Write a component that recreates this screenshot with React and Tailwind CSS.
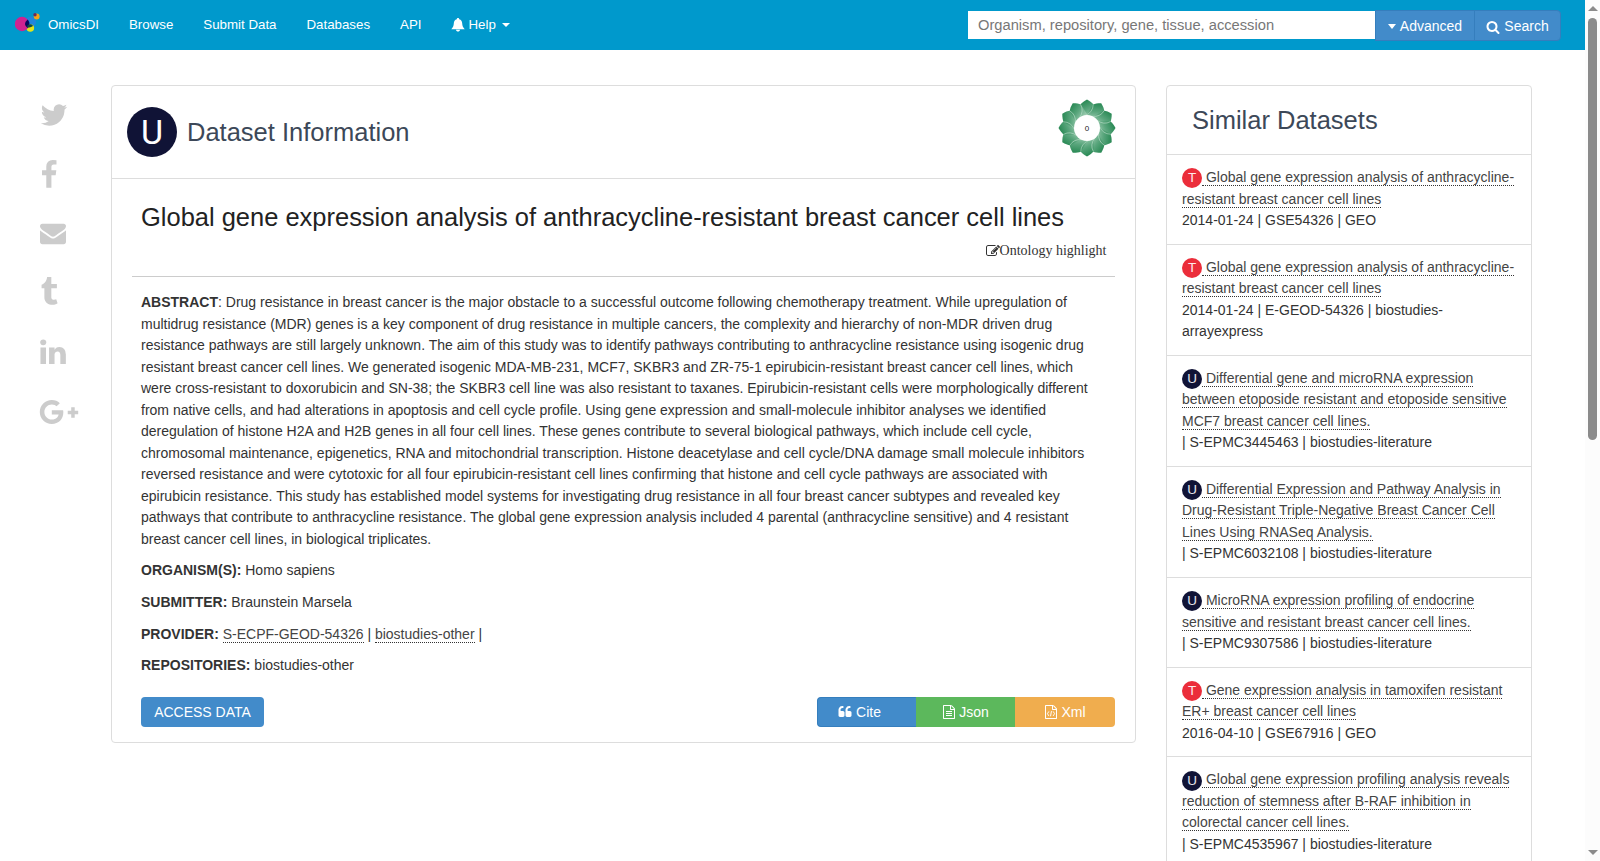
import React from 'react';
import { FaGooglePlusG } from 'react-icons/fa';

const ICONS = {
    twitter: 'M1684 408q-67 98-162 167 1 14 1 42 0 130-38 259.5t-115.5 248.5-184.5 210.5-258 146-323 54.5q-271 0-496-145 35 4 78 4 225 0 401-138-105-2-188-64.5t-114-159.5q33 5 61 5 43 0 85-11-112-23-185.5-111.5t-73.5-205.5v-4q68 38 146 41-66-44-105-115t-39-154q0-88 44-163 121 149 294.5 238.5t371.5 99.5q-8-38-8-74 0-134 94.5-228.5t228.5-94.5q140 0 236 102 109-21 205-78-37 115-142 178 93-10 186-50z',
    facebook: 'M1343 12v264h-157q-86 0-116 36t-30 108v189h293l-39 296h-254v759h-306v-759h-255v-296h255v-218q0-186 104-288.5t277-102.5q147 0 228 12z',
    envelope: 'M1792 710v794q0 66-47 113t-113 47h-1472q-66 0-113-47t-47-113v-794q44 49 101 87 362 246 497 345 57 42 92.5 65.5t94.5 48 110 24.5h2q51 0 110-24.5t94.5-48 92.5-65.5q170-123 498-345 57-39 100-87zm0-294q0 79-49 151t-122 123q-376 261-468 325-10 7-42.5 31t-54 38.5-52 32.5-57.5 27-50 9h-2q-23 0-50-9t-57.5-27-52-32.5-54-38.5-42.5-31q-91-64-262-182.5t-205-142.5q-62-42-117-115.5t-55-136.5q0-78 41.5-130t118.5-52h1472q65 0 112.5 47t47.5 113z',
    tumblr: 'M1328 1329l80 237q-23 35-111 66t-177 32q-104 2-190.5-26t-142.5-74-95-106-55.5-120-16.5-118v-544h-168v-215q72-26 129-69.5t91-90 58-102 34-99 15-88.5q1-5 4.5-8.5t7.5-3.5h244v424h333v252h-334v518q0 30 6.5 56t22.5 52.5 49.5 41.5 81.5 14q78-2 134-29z',
    linkedin: 'M477 625v991h-330v-991h330zm21-306q1 73-50.5 122t-135.5 49h-2q-82 0-132-49t-50-122q0-74 51.5-122.5t134.5-48.5 133 48.5 51 122.5zm1166 729v568h-329v-530q0-105-40.5-164.5t-126.5-59.5q-63 0-105.5 34.5t-63.5 85.5q-11 30-11 81v553h-329q2-399 2-647t-1-296l-1-48h329v144h-2q20-32 41-56t56.5-52 87-43.5 114.5-15.5q171 0 275 113.5t104 332.5z',
    search: 'M1216 832q0-185-131.5-316.5t-316.5-131.5-316.5 131.5-131.5 316.5 131.5 316.5 316.5 131.5 316.5-131.5 131.5-316.5zm512 832q0 52-38 90t-90 38q-54 0-90-38l-343-342q-179 124-399 124-143 0-273.5-55.5t-225-150-150-225-55.5-273.5 55.5-273.5 150-225 225-150 273.5-55.5 273.5 55.5 225 150 150 225 55.5 273.5q0 220-124 399l343 343q37 37 37 90z',
    edit: 'M888 1184l116-116-152-152-116 116v56h96v96h56zm440-720q-16-16-33 1l-350 350q-17 17-1 33t33-1l350-350q17-17 1-33zm80 594v190q0 119-84.5 203.5t-203.5 84.5h-832q-119 0-203.5-84.5t-84.5-203.5v-832q0-119 84.5-203.5t203.5-84.5h832q63 0 117 25 15 7 18 23 3 17-9 29l-49 49q-14 14-32 8-23-6-45-6h-832q-66 0-113 47t-47 113v832q0 66 47 113t113 47h832q66 0 113-47t47-113v-126q0-13 9-22l64-64q15-15 35-7t20 29zm-96-738l288 288-672 672h-288v-288zm444 132l-92 92-288-288 92-92q28-28 68-28t68 28l152 152q28 28 28 68t-28 68z',
    quote: 'M832 960v384q0 80-56 136t-136 56h-384q-80 0-136-56t-56-136v-704q0-104 40.5-198.5t109.5-163.5 163.5-109.5 198.5-40.5h64q26 0 45 19t19 45v128q0 26-19 45t-45 19h-64q-106 0-181 75t-75 181v32q0 40 28 68t68 28h224q80 0 136 56t56 136zm896 0v384q0 80-56 136t-136 56h-384q-80 0-136-56t-56-136v-704q0-104 40.5-198.5t109.5-163.5 163.5-109.5 198.5-40.5h64q26 0 45 19t19 45v128q0 26-19 45t-45 19h-64q-106 0-181 75t-75 181v32q0 40 28 68t68 28h224q80 0 136 56t56 136z',
    file: 'M1596 380q28 28 48 76t20 88v1152q0 40-28 68t-68 28h-1344q-40 0-68-28t-28-68v-1600q0-40 28-68t68-28h896q40 0 88 20t76 48zm-444-244v376h376q-10-29-22-41l-313-313q-12-12-41-22zm384 1528v-1024h-416q-40 0-68-28t-28-68v-416h-768v1536h1280z'
};

const NAV_LINKS = ['OmicsDI', 'Browse', 'Submit Data', 'Databases', 'API'];

const SIMILAR = [
    { type: 'T', title: 'Global gene expression analysis of anthracycline-resistant breast cancer cell lines', meta: '2014-01-24 | GSE54326 | GEO' },
    { type: 'T', title: 'Global gene expression analysis of anthracycline-resistant breast cancer cell lines', meta: '2014-01-24 | E-GEOD-54326 | biostudies-arrayexpress' },
    { type: 'U', title: 'Differential gene and microRNA expression between etoposide resistant and etoposide sensitive MCF7 breast cancer cell lines.', meta: '| S-EPMC3445463 | biostudies-literature' },
    { type: 'U', title: 'Differential Expression and Pathway Analysis in Drug-Resistant Triple-Negative Breast Cancer Cell Lines Using RNASeq Analysis.', meta: '| S-EPMC6032108 | biostudies-literature' },
    { type: 'U', title: 'MicroRNA expression profiling of endocrine sensitive and resistant breast cancer cell lines.', meta: '| S-EPMC9307586 | biostudies-literature' },
    { type: 'T', title: 'Gene expression analysis in tamoxifen resistant ER+ breast cancer cell lines', meta: '2016-04-10 | GSE67916 | GEO' },
    { type: 'U', title: 'Global gene expression profiling analysis reveals reduction of stemness after B-RAF inhibition in colorectal cancer cell lines.', meta: '| S-EPMC4535967 | biostudies-literature' }
];

const ABSTRACT = 'Drug resistance in breast cancer is the major obstacle to a successful outcome following chemotherapy treatment. While upregulation of multidrug resistance (MDR) genes is a key component of drug resistance in multiple cancers, the complexity and hierarchy of non-MDR driven drug resistance pathways are still largely unknown. The aim of this study was to identify pathways contributing to anthracycline resistance using isogenic drug resistant breast cancer cell lines. We generated isogenic MDA-MB-231, MCF7, SKBR3 and ZR-75-1 epirubicin-resistant breast cancer cell lines, which were cross-resistant to doxorubicin and SN-38; the SKBR3 cell line was also resistant to taxanes. Epirubicin-resistant cells were morphologically different from native cells, and had alterations in apoptosis and cell cycle profile. Using gene expression and small-molecule inhibitor analyses we identified deregulation of histone H2A and H2B genes in all four cell lines. These genes contribute to several biological pathways, which include cell cycle, chromosomal maintenance, epigenetics, RNA and mitochondrial transcription. Histone deacetylase and cell cycle/DNA damage small molecule inhibitors reversed resistance and were cytotoxic for all four epirubicin-resistant cell lines confirming that histone and cell cycle pathways are associated with epirubicin resistance. This study has established model systems for investigating drug resistance in all four breast cancer subtypes and revealed key pathways that contribute to anthracycline resistance. The global gene expression analysis included 4 parental (anthracycline sensitive) and 4 resistant breast cancer cell lines, in biological triplicates.';

const Icon = ({ name, className, children }) => (
    <svg viewBox="0 0 1792 1792" fill="currentColor" className={className}>
        <path d={ICONS[name]} />
        {children}
    </svg>
);

const Bell = () => (
    <svg viewBox="0 0 14 14" fill="currentColor" className="w-[14px] h-[14px] mr-[4px] -ml-px">
        <path d="M7 0c.7 0 1.2.5 1.2 1.2 2 .5 2.9 2.1 3 4.2.1 2.3.7 3.5 2.5 5.9H.3C2.1 8.9 2.7 7.7 2.800 5.400c.1-2.100 1-3.700 3-4.200C5.800.5 6.300 0 7 0zM5 11.800h4c0 2.400-4 2.400-4 0z" />
    </svg>
);

const Logo = () => (
    <svg viewBox="0 0 27 22" className="w-[27px] h-[22px]">
        <circle cx="15.5" cy="9" r="5.5" fill="#1f86dd" />
        <circle cx="15.3" cy="15" r="3.8" fill="#e2e619" />
        <circle cx="7" cy="11" r="7.2" fill="#cf2390" />
        <path d="M12.800 6.600A7.200 7.200 0 0 1 13 15C9.500 13.500 8.800 9.500 12.800 6.600z" fill="#08085e" />
        <path d="M11.800 13.500c1.500 1.500 4 1.300 6.200-.4-1-2.200-4.500-2.600-6.200.4z" fill="#0c4a4a" />
        <circle cx="21.7" cy="3.5" r="2.9" fill="#f5a31a" />
        <circle cx="20" cy="1.8" r="1.7" fill="#6b2a5c" />
    </svg>
);

const PETALS = Array.from({ length: 12 }, (_, i) => i * 30);

const ClaimFlower = () => (
    <svg viewBox="-30 -30 60 60" className="w-[60px] h-[60px]">
        <defs>
            <linearGradient id="petal" gradientUnits="userSpaceOnUse" x1="5" y1="-10" x2="-3" y2="-28">
                <stop offset="0" stopColor="#a9d3ba" />
                <stop offset="0.5" stopColor="#5aa67d" />
                <stop offset="1" stopColor="#248650" />
            </linearGradient>
        </defs>
        {PETALS.map(deg => (
            <path
                key={deg}
                d="M0-28.500C3-26.800 5.200-25.200 6.400-23.300L7-11H-7L-6.400-23.300C-5.200-25.200-3-26.800 0-28.500z"
                transform={`rotate(${deg})`}
                fill="url(#petal)"
            />
        ))}
        {PETALS.map(deg => (
            <path key={deg} d="M6.200-23.300Q6-16-1.500-12.500" transform={`rotate(${deg})`} fill="none" stroke="#b9dcc7" strokeWidth="0.6" />
        ))}
        <circle r="13" fill="#fff" />
        <text y="2.5" textAnchor="middle" fontSize="8" fill="#222">0</text>
    </svg>
);

const Badge = ({ type }) => (
    <span
        className={`inline-block w-5 h-5 rounded-full text-center align-middle text-[13.5px] leading-5 text-white/90 ${
            type === 'T' ? 'bg-[#eb2d3a]' : 'bg-[#101336]'
        }`}
    >
        {type}
    </span>
);

const Field = ({ label, children }) => (
    <p className="mb-[10px]">
        <b>{label}:</b> {children}
    </p>
);

const ShareBar = () => (
    <div className="w-[111px] shrink-0 pl-10 text-[#ccc]">
        <div className="h-[60px] flex items-center"><Icon name="twitter" className="w-[30px] h-[30px] -ml-[1.5px]" /></div>
        <div className="h-[59px] flex items-center"><Icon name="facebook" className="w-[30px] h-[30px] -ml-[6.5px]" /></div>
        <div className="h-[57px] flex items-center"><Icon name="envelope" className="w-[26px] h-[26px] -ml-[0.5px]" /></div>
        <div className="h-[61px] flex items-center"><Icon name="tumblr" className="w-[30px] h-[30px] -ml-[6.5px]" /></div>
        <div className="h-[60px] flex items-center"><Icon name="linkedin" className="w-[30px] h-[30px] -ml-0.5" /></div>
        <div className="h-[59px] flex items-center"><FaGooglePlusG className="w-[40px] h-[32px] -ml-px" /></div>
    </div>
);

const Scrollbar = () => (
    <div className="w-[15px] shrink-0 h-full bg-[#fcfcfc] flex flex-col items-center justify-between pt-[6px] pb-[6px]">
        <div className="flex flex-col items-center gap-[7px]">
            <svg viewBox="0 0 10 5" className="w-[10px] h-[5px]"><path d="M0 5 5 0l5 5z" fill="#8b8b8b" /></svg>
            <div className="w-[9px] h-[422px] rounded-full bg-[#8b8b8b]"></div>
        </div>
        <svg viewBox="0 0 10 5" className="w-[10px] h-[5px]"><path d="M0 0h10L5 5z" fill="#8b8b8b" /></svg>
    </div>
);

const App = () => {
    return (
        <div className="flex w-[1600px] h-[861px] overflow-hidden bg-white text-[14px] leading-[21.5px] text-[#333] font-['Liberation_Sans',Arial,sans-serif]">
            <div className="w-[1585px] shrink-0">
                {/* Top navigation */}
                <nav className="h-[50px] bg-[#0099cc] flex justify-between text-white">
                    <div className="flex items-center pl-[15px] text-[13.3px]">
                        <div className="-mt-0.5"><Logo /></div>
                        <div className="flex items-center gap-[30px] pl-[6px]">
                            {NAV_LINKS.map(link => <a key={link}>{link}</a>)}
                            <a className="flex items-center">
                                <Bell />
                                Help
                                <span className="ml-[6px] -mt-px border-x-4 border-t-4 border-x-transparent border-t-white"></span>
                            </a>
                        </div>
                    </div>
                    <div className="flex items-start pt-[10px] pr-6">
                        <input
                            className="w-[408px] h-[28px] mt-px bg-white px-[10px] pb-px text-[14.7px] placeholder:text-[#777]"
                            placeholder="Organism, repository, gene, tissue, accession"
                        />
                        <button className="h-[31px] w-[100px] -ml-px pt-[3px] border border-[#357ebd] bg-[#428bca] flex items-center justify-center">
                            <span className="mr-1 -mt-0.5 border-x-4 border-t-[5px] border-x-transparent border-t-white"></span>
                            Advanced
                        </button>
                        <button className="h-[31px] w-[87px] -ml-px pt-[3px] border border-[#357ebd] rounded-r bg-[#428bca] flex items-center justify-center">
                            <Icon name="search" className="w-[14px] h-[14px] mr-1 -mt-px" />
                            Search
                        </button>
                    </div>
                </nav>

                <div className="flex items-start pt-[35px]">
                    <ShareBar />

                    {/* Dataset panel */}
                    <main className="w-[1025px] h-[658px] shrink-0 border border-[#ddd] rounded">
                        <header className="h-[93px] border-b border-[#ddd] flex items-center pl-[15px] pr-[18px]">
                            <span className="w-[50px] h-[50px] rounded-full bg-[#101336] text-white font-[Roboto] text-[34px] leading-[50px] text-center">U</span>
                            <h3 className="ml-[10px] mt-[2px] text-[25.5px] text-[#3c4858] flex-1">Dataset Information</h3>
                            <div className="-mt-2"><ClaimFlower /></div>
                        </header>
                        <div className="pl-[29px] pr-5">
                            <h2 className="pt-[22px] text-[25.47px] leading-[32px] text-[#222]">
                                Global gene expression analysis of anthracycline-resistant breast cancer cell lines
                            </h2>
                            <div className="flex justify-end items-center mt-[7px] pr-[8.5px] font-['Liberation_Serif',serif]">
                                <Icon name="edit" className="w-[14px] h-[14px]" />
                                Ontology highlight
                            </div>
                            <hr className="-ml-[9px] mt-[14px] mb-[15.5px] border-[#ccc]" />
                            <div className="pr-[20px]">
                                <p className="mb-[10px]"><b>ABSTRACT</b>: {ABSTRACT}</p>
                                <Field label="ORGANISM(S)">Homo sapiens</Field>
                                <Field label="SUBMITTER">Braunstein Marsela</Field>
                                <div className="pt-[0.5px] -mb-[0.5px]">
                                    <Field label="PROVIDER">
                                        <a className="border-b border-dotted border-[#333] text-[#444]">S-ECPF-GEOD-54326</a>
                                        {' | '}
                                        <a className="border-b border-dotted border-[#333] text-[#444]">biostudies-other</a>
                                        {' |'}
                                    </Field>
                                </div>
                                <Field label="REPOSITORIES">biostudies-other</Field>
                            </div>
                            <div className="flex justify-between mt-[21px] text-white">
                                <button className="w-[123px] h-[30px] pt-px rounded bg-[#428bca]">ACCESS DATA</button>
                                <div className="flex">
                                    <button className="w-[99px] h-[30px] pt-px rounded-l border border-r-0 border-[#357ebd] bg-[#428bca] flex items-center justify-center pr-[15px]">
                                        <Icon name="quote" className="w-[14px] h-[14px] mr-1 -mt-0.5" />Cite
                                    </button>
                                    <button className="w-[99px] h-[30px] pt-px bg-[#5cb85c] flex items-center justify-center">
                                        <Icon name="file" className="w-[14px] h-[14px] mr-[3px] -mt-px">
                                            <path d="M512 768h768v128h-768zM512 1024h768v128h-768zM512 1280h768v128h-768z" />
                                        </Icon>
                                        Json
                                    </button>
                                    <button className="w-[100px] h-[30px] pt-px rounded-r bg-[#f0ad4e] flex items-center justify-center">
                                        <Icon name="file" className="w-[14px] h-[14px] mr-[3px] -mt-px">
                                            <path d="M620 820 440 1110l180 290M1170 820l180 290-180 290M960 780l-130 660" fill="none" stroke="currentColor" strokeWidth="120" />
                                        </Icon>
                                        Xml
                                    </button>
                                </div>
                            </div>
                        </div>
                    </main>

                    {/* Similar datasets */}
                    <aside className="w-[366px] shrink-0 ml-[30px] border border-[#ddd] rounded">
                        <h3 className="h-[68px] pl-[25px] text-[25.5px] leading-[68px] text-[#3c4858]">Similar Datasets</h3>
                        {SIMILAR.map((item, i) => (
                            <div key={i} className="border-t border-[#ddd] px-[15px] pt-3 pb-[12.14px]">
                                <Badge type={item.type} />
                                <a className="border-b border-dotted border-[#333] text-[#444]">
                                    {' '}{item.title}
                                </a>
                                <div>{item.meta}</div>
                            </div>
                        ))}
                    </aside>
                </div>
            </div>
            <Scrollbar />
        </div>
    );
};

export default App;
